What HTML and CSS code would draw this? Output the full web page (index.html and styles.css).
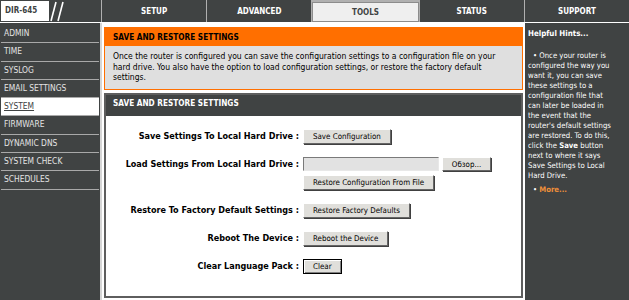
FILE: index.html
```html
<!DOCTYPE html>
<html>
<head>
<meta charset="utf-8">
<title>DIR-645 : Tools : System</title>
<link rel="stylesheet" href="styles.css">
</head>
<body>
	<!-- top bar -->
	<div class="topbar">
		<div class="logo">
			<span class="model">DIR-645</span>
			<svg class="slashes" width="22" height="22" viewBox="0 0 22 22">
				<line x1="2" y1="21" x2="7" y2="2" stroke="#fff" stroke-width="1.6"/>
				<line x1="9" y1="21" x2="14" y2="2" stroke="#fff" stroke-width="1.6"/>
			</svg>
		</div>
		<div class="tab">SETUP</div>
		<div class="tab">ADVANCED</div>
		<div class="tab active">TOOLS</div>
		<div class="tab">STATUS</div>
		<div class="tab">SUPPORT</div>
	</div>

	<div class="main">
		<!-- menu -->
		<ul class="nav">
			<li>ADMIN</li>
			<li>TIME</li>
			<li>SYSLOG</li>
			<li>EMAIL SETTINGS</li>
			<li class="current">SYSTEM</li>
			<li>FIRMWARE</li>
			<li>DYNAMIC DNS</li>
			<li>SYSTEM CHECK</li>
			<li>SCHEDULES</li>
		</ul>

		<!-- content -->
		<div class="content">
			<div class="box intro">
				<h2>SAVE AND RESTORE SETTINGS</h2>
				<p>Once the router is configured you can save the configuration settings to a configuration file on your hard drive. You also have the option to load configuration settings, or restore the factory default settings.</p>
			</div>

			<div class="box form">
				<h2>SAVE AND RESTORE SETTINGS</h2>
				<div class="rows">
					<div class="row">
						<div class="label">Save Settings To Local Hard Drive :</div>
						<div class="field"><input type="button" class="btn" value="Save Configuration"></div>
					</div>
					<div class="row">
						<div class="label">Load Settings From Local Hard Drive :</div>
						<div class="field">
							<div class="fileline">
								<input type="text" class="filebox">
								<input type="button" class="btn browse" value="Обзор...">
							</div>
							<div><input type="button" class="btn" value="Restore Configuration From File"></div>
						</div>
					</div>
					<div class="row">
						<div class="label">Restore To Factory Default Settings :</div>
						<div class="field"><input type="button" class="btn" value="Restore Factory Defaults"></div>
					</div>
					<div class="row">
						<div class="label">Reboot The Device :</div>
						<div class="field"><input type="button" class="btn" value="Reboot the Device"></div>
					</div>
					<div class="row">
						<div class="label">Clear Language Pack :</div>
						<div class="field"><input type="button" class="btn default" value="Clear"></div>
					</div>
				</div>
			</div>
		</div>

		<!-- hints -->
		<div class="hints">
			<h3>Helpful Hints...</h3>
			<ul>
				<li>&bull; Once your router is configured the way you want it, you can save these settings to a configuration file that can later be loaded in the event that the router's default settings are restored. To do this, click the <b>Save</b> button next to where it says Save Settings to Local Hard Drive.</li>
				<li class="more">&bull; <a href="#">More...</a></li>
			</ul>
		</div>
	</div>
</body>
</html>
```

FILE: styles.css
```css
body {
	margin: 0;
	background: #fff;
	font-family: "DejaVu Sans Condensed", "DejaVu Sans", sans-serif;
	font-size: 8.5px;
	color: #000;
}

/* top bar */
.topbar {
	display: flex;
	gap: 1px;
	height: 22px;
	margin-bottom: 1px;
	background: #b0b0b0;
	font-size: 8px;
}

.logo {
	width: 101px;
	flex: none;
	display: flex;
	align-items: center;
	background: #404343;
}

.model {
	box-sizing: border-box;
	width: 48px;
	height: 20px;
	margin-left: 1px;
	padding-left: 4px;
	line-height: 20px;
	background: #fff;
	color: #404343;
	font-weight: bold;
}

.slashes {
	display: block;
}

.tab {
	flex: 1;
	display: flex;
	align-items: center;
	justify-content: center;
	background: #404343;
	color: #fff;
	font-weight: bold;
}

.tab.active {
	box-sizing: border-box;
	margin-top: 2px;
	background: #efefef;
	border: 1px solid #8c8c8c;
	color: #404343;
}

/* columns */
.main {
	display: grid;
	grid-template-columns: 102px 1fr 105px;
	min-height: 277px;
}

/* menu */
.nav {
	margin: 0;
	padding: 2px 0 0;
	list-style: none;
	background: #404343;
	border-right: 2px solid #d6d6d6;
}

.nav li {
	height: 17.3px;
	line-height: 17.3px;
	margin: 0 1px;
	padding-left: 3px;
	border-bottom: 1px solid #a9a9a9;
	color: #e4e4e4;
	font-size: 8.4px;
}

.nav li.current {
	background: #fff;
	color: #404343;
	text-decoration: underline;
}

/* content */
.content {
	padding: 4px 1px 0 2px;
}

.box h2 {
	margin: 0;
	font-size: 8.2px;
	font-weight: bold;
}

.intro {
	border: 1px solid #ff6f00;
}

.intro h2 {
	height: 18px;
	line-height: 18px;
	padding-left: 8px;
	background: #ff6f00;
	color: #000;
}

.intro p {
	margin: 0;
	padding: 5px 8px 6px;
	line-height: 10.7px;
	background: #dfdfdf;
}

.form {
	margin-top: 3px;
	border: 2px solid #5e5e5e;
}

.form h2 {
	height: 21px;
	padding: 3px 0 0 7px;
	box-sizing: border-box;
	line-height: 10px;
	background: #404343;
	color: #fff;
}

.rows {
	display: flex;
	flex-direction: column;
	gap: 13px;
	padding: 13px 0 22px;
}

.row {
	display: grid;
	grid-template-columns: 197px 1fr;
}

.label {
	padding-right: 4px;
	text-align: right;
	line-height: 15px;
	font-weight: bold;
	font-size: 9px;
}

.field {
	display: flex;
	flex-direction: column;
	align-items: flex-start;
	gap: 4px;
}

.fileline {
	display: flex;
	align-items: center;
	gap: 3px;
}

.btn {
	height: 15px;
	margin: 0;
	padding: 0 9px;
	font-family: inherit;
	font-size: 7.9px;
	color: #000;
	background: #e0dfdb;
	border: 1px solid;
	border-color: #fff #666 #666 #fff;
	box-shadow: 1px 1px 0 #404040;
}

.btn.browse {
	width: 49px;
	height: 14px;
	padding: 0;
}

.btn.default {
	border-color: #000;
	box-shadow: inset 1px 1px 0 #fff, inset -1px -1px 0 #808080;
}

.filebox {
	box-sizing: border-box;
	width: 136px;
	height: 14px;
	margin: 0;
	padding: 0;
	background: #e2e2e2;
	border: 1px solid;
	border-color: #7a7a7a #e8e8e8 #e8e8e8 #7a7a7a;
}

/* hints */
.hints {
	margin-left: 1px;
	padding: 6px 15px 0 3px;
	background: #404343;
	color: #fff;
	font-size: 7.7px;
	line-height: 10px;
}

.hints h3 {
	margin: 0 0 12px;
	font-size: 7.9px;
	font-weight: bold;
}

.hints ul {
	margin: 0;
	padding: 0;
	list-style: none;
}

.hints li {
	text-indent: 5px;
}

.hints li.more {
	margin-top: 4px;
}

.hints a {
	color: #f0903a;
	font-weight: bold;
	text-decoration: none;
}
```
